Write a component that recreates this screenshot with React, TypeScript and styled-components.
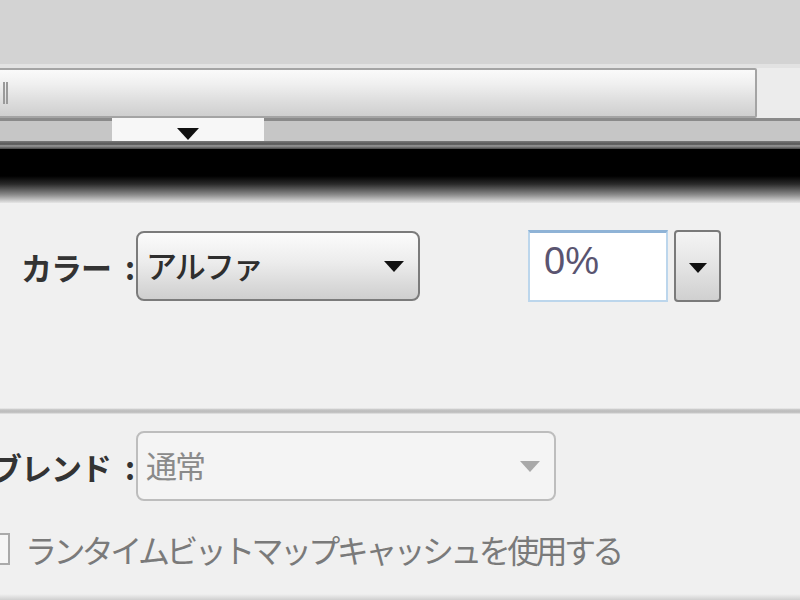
import React from 'react';
import styled, { createGlobalStyle } from 'styled-components';

const GlobalStyle = createGlobalStyle`
  html, body {
    margin: 0;
    padding: 0;
    width: 800px;
    height: 600px;
    overflow: hidden;
    background: #f0f0f0;
    font-family: "Noto Sans CJK JP", "Noto Sans", sans-serif;
  }
`;

const Page = styled.div`
  width: 800px;
  height: 600px;
  display: flex;
  flex-direction: column;
  overflow: hidden;
`;

const Header = styled.div`
  height: 64px;
  background: #d3d3d3;
  border-bottom: 4px solid #e2e2e2;
`;

const ScrollRow = styled.div`
  height: 50px;
  display: flex;
  background: #ececec;
`;

const Track = styled.div`
  width: 761px;
  margin-left: -4px;
  box-sizing: border-box;
  border: 2px solid #a4a4a4;
  border-radius: 2px;
  background: linear-gradient(#fafafa 0%, #f0f0f0 30%, #dcdcdc 70%, #cfcfcf 100%);
  display: flex;
  align-items: center;
  padding-left: 5px;
`;

const Grip = styled.div`
  width: 5px;
  height: 22px;
  border-left: 2px solid #9a9a9a;
  border-right: 2px solid #9a9a9a;
  box-sizing: border-box;
`;

const TabStrip = styled.div`
  height: 20px;
  background: #c6c6c6;
  border-top: 3px solid #8a8a8a;
  display: flex;
  padding-left: 112px;
`;

const Tab = styled.div`
  width: 152px;
  margin-top: -3px;
  height: 23px;
  background: #f7f7f7;
  display: flex;
  justify-content: center;
  padding-top: 6px;
  box-sizing: border-box;
`;

const DarkLines = styled.div`
  height: 8px;
  background: linear-gradient(#7a7a7a 0%, #555 40%, #9a9a9a 60%, #444 100%);
`;

const Shade = styled.div`
  height: 54px;
  background: linear-gradient(#000 0%, #000 50%, #2a2a2a 65%, #8c8c8c 85%, #e6e6e6 100%);
`;

const Section = styled.div<{ $height: number; $pad: number }>`
  height: ${(p) => p.$height}px;
  box-sizing: border-box;
  padding-top: ${(p) => p.$pad}px;
  background: #f0f0f0;
`;

const Divider = styled.div`
  height: 6px;
  background: linear-gradient(#f0f0f0 0%, #c2c2c2 30%, #bcbcbc 70%, #e8e8e8 100%);
`;

const Row = styled.div`
  display: flex;
  align-items: center;
  height: 72px;
`;

const Label = styled.div`
  width: 136px;
  min-width: 0;
  flex-shrink: 0;
  display: flex;
  justify-content: flex-end;
  white-space: nowrap;
  font-size: 31px;
  font-weight: 700;
  letter-spacing: -1px;
  color: #333;
  padding-right: 2px;
  box-sizing: border-box;
`;

const LabelText = styled.span`
  flex-shrink: 0;
`;

const Colon = styled.span`
  margin-left: 14px;
`;

const Select = styled.div<{ $width: number; $disabled?: boolean }>`
  width: ${(p) => p.$width}px;
  height: 70px;
  box-sizing: border-box;
  border: 2px solid ${(p) => (p.$disabled ? '#bdbdbd' : '#7b7b7b')};
  border-radius: 8px;
  background: ${(p) =>
    p.$disabled ? '#f4f4f4' : 'linear-gradient(#fbfbfb 0%, #ececec 45%, #d9d9d9 80%, #cfcfcf 100%)'};
  display: flex;
  align-items: center;
  justify-content: space-between;
  padding: 0 14px 4px 8px;
  font-size: 31px;
  letter-spacing: -2px;
  color: ${(p) => (p.$disabled ? '#8a8a8a' : '#2e2e2e')};
  font-weight: ${(p) => (p.$disabled ? 400 : 500)};
`;

const Arrow = styled.span<{ $color?: string; $size?: number }>`
  width: 0;
  height: 0;
  border-left: ${(p) => p.$size ?? 10}px solid transparent;
  border-right: ${(p) => p.$size ?? 10}px solid transparent;
  border-top: ${(p) => (p.$size ?? 10) + 1}px solid ${(p) => p.$color ?? '#111'};
  margin-top: 4px;
`;

const Input = styled.div`
  margin-left: 108px;
  width: 140px;
  height: 72px;
  box-sizing: border-box;
  background: #fff;
  border: 2px solid #bcd6ec;
  border-top: 3px solid #8fb3d6;
  display: flex;
  align-items: center;
  padding: 0 0 10px 14px;
  font-family: "Liberation Sans", Arial, sans-serif;
  font-size: 38px;
  color: #5a5470;
`;

const SpinButton = styled.div`
  margin-left: 6px;
  width: 47px;
  height: 72px;
  box-sizing: border-box;
  border: 2px solid #7a7a7a;
  border-radius: 4px;
  background: linear-gradient(#f4f4f4 0%, #e4e4e4 50%, #d0d0d0 100%);
  display: flex;
  align-items: center;
  justify-content: center;
`;

const CheckRow = styled.label`
  display: flex;
  align-items: center;
  margin-top: 24px;
  margin-left: -8px;
  gap: 15px;
  white-space: nowrap;
`;

const Box = styled.span`
  width: 18px;
  height: 32px;
  box-sizing: border-box;
  border: 2px solid #aaa;
  background: #f6f6f6;
`;

const CheckText = styled.span`
  font-size: 32px;
  letter-spacing: -3.6px;
  color: #7a7a7a;
`;

const Footer = styled.div`
  flex: 1;
  background: linear-gradient(#f0f0f0 0%, #cfcfcf 100%);
`;

export default function App() {
  return (
    <Page>
      <GlobalStyle />
      <Header />
      <ScrollRow>
        <Track>
          <Grip />
        </Track>
      </ScrollRow>
      <TabStrip>
        <Tab>
          <Arrow $size={11} />
        </Tab>
      </TabStrip>
      <DarkLines />
      <Shade />
      <Section $height={205} $pad={27}>
        <Row>
          <Label>
            <LabelText>カラー</LabelText>
            <Colon>:</Colon>
          </Label>
          <Select $width={284}>
            <span>アルファ</span>
            <Arrow />
          </Select>
          <Input>0%</Input>
          <SpinButton>
            <Arrow $size={9} />
          </SpinButton>
        </Row>
      </Section>
      <Divider />
      <Section $height={180} $pad={16}>
        <Row>
          <Label>
            <LabelText>ブレンド</LabelText>
            <Colon>:</Colon>
          </Label>
          <Select $width={420} $disabled>
            <span>通常</span>
            <Arrow $color="#a9a9a9" />
          </Select>
        </Row>
        <CheckRow>
          <Box />
          <CheckText>ランタイムビットマップキャッシュを使用する</CheckText>
        </CheckRow>
      </Section>
      <Footer />
    </Page>
  );
}
